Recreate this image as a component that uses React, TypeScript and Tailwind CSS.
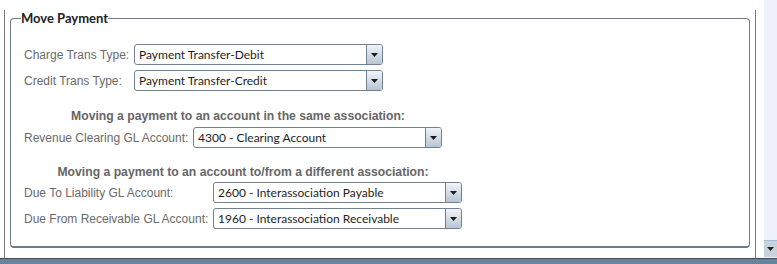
import React from "react";

const labelCls =
  "text-[12px] leading-[14px] text-[#6a6a6a] whitespace-nowrap [font-family:'Liberation_Sans',Arial,sans-serif]";

function Select({ value }: { value: string }) {
  return (
    <div className="flex h-[21px] w-[249px] rounded-[3px] border border-[#6f8193] bg-white">
      <div className="flex flex-1 items-center pl-[4px] text-[12px] leading-[14px] text-[#1e1e1e] whitespace-nowrap overflow-hidden [font-family:Lato,'Open_Sans',sans-serif]">
        {value}
      </div>
      <div className="flex w-[16px] items-center justify-center rounded-r-[2px] border-l border-[#6f8193] bg-gradient-to-b from-[#f1f4f8] to-[#b7c5d3]">
        <svg width="7" height="4" viewBox="0 0 7 4">
          <path d="M0 0h7L3.5 4z" fill="#1b1b1b" />
        </svg>
      </div>
    </div>
  );
}

function Row({ label, labelW, value }: { label: string; labelW: string; value: string }) {
  return (
    <div className="flex items-center">
      <div className={`${labelW} ${labelCls}`}>{label}</div>
      <Select value={value} />
    </div>
  );
}

export default function App() {
  return (
    <div className="flex h-[264px] w-[777px] flex-col overflow-hidden bg-white">
      <div className="flex h-[258px]">
        <div className="flex-1 pl-[4px] pr-[8px]">
          <div className="h-[250px] border-x border-b border-[#7b7b7b] px-[5px]">
            <fieldset className="mt-[10px] h-[238px] rounded-[4px] border border-b-2 border-[#6f7b88] pl-[13px]">
              <legend className="-ml-[3px] text-[13px] font-bold leading-[16px] text-[#222] [font-family:Lato,'Open_Sans',sans-serif]">
                Move Payment
              </legend>
              <div className="mt-[18px] flex flex-col gap-[5px]">
                <Row label="Charge Trans Type:" labelW="w-[110px]" value="Payment Transfer-Debit" />
                <Row label="Credit Trans Type:" labelW="w-[110px]" value="Payment Transfer-Credit" />
              </div>
              <div className="mt-[18px] w-[428px] text-center text-[12.2px] font-bold leading-[14px] text-[#666] [font-family:'Liberation_Sans',Arial,sans-serif]">
                Moving a payment to an account in the same association:
              </div>
              <div className="mt-[4px]">
                <Row label="Revenue Clearing GL Account:" labelW="w-[169px]" value="4300 - Clearing Account" />
              </div>
              <div className="mt-[17px] w-[438px] text-center text-[12.2px] font-bold leading-[14px] text-[#666] [font-family:'Liberation_Sans',Arial,sans-serif]">
                Moving a payment to an account to/from a different association:
              </div>
              <div className="mt-[3px] flex flex-col gap-[5px]">
                <Row label="Due To Liability GL Account:" labelW="w-[189px]" value="2600 - Interassociation Payable" />
                <Row label="Due From Receivable GL Account:" labelW="w-[189px]" value="1960 - Interassociation Receivable" />
              </div>
            </fieldset>
          </div>
        </div>
        <div className="flex w-[13px] flex-col bg-[#eef2f8]">
          <div className="flex-1" />
          <div className="mb-[1px] flex h-[17px] items-center justify-center border-t border-[#9dbbe0] bg-[#c8d2dd]">
            <svg width="7" height="4" viewBox="0 0 7 4">
              <path d="M0 0h7L3.5 4z" fill="#222" />
            </svg>
          </div>
        </div>
      </div>
      <div className="h-[6px] border-t border-[#3e4f60] bg-[#6b8399]" />
    </div>
  );
}
